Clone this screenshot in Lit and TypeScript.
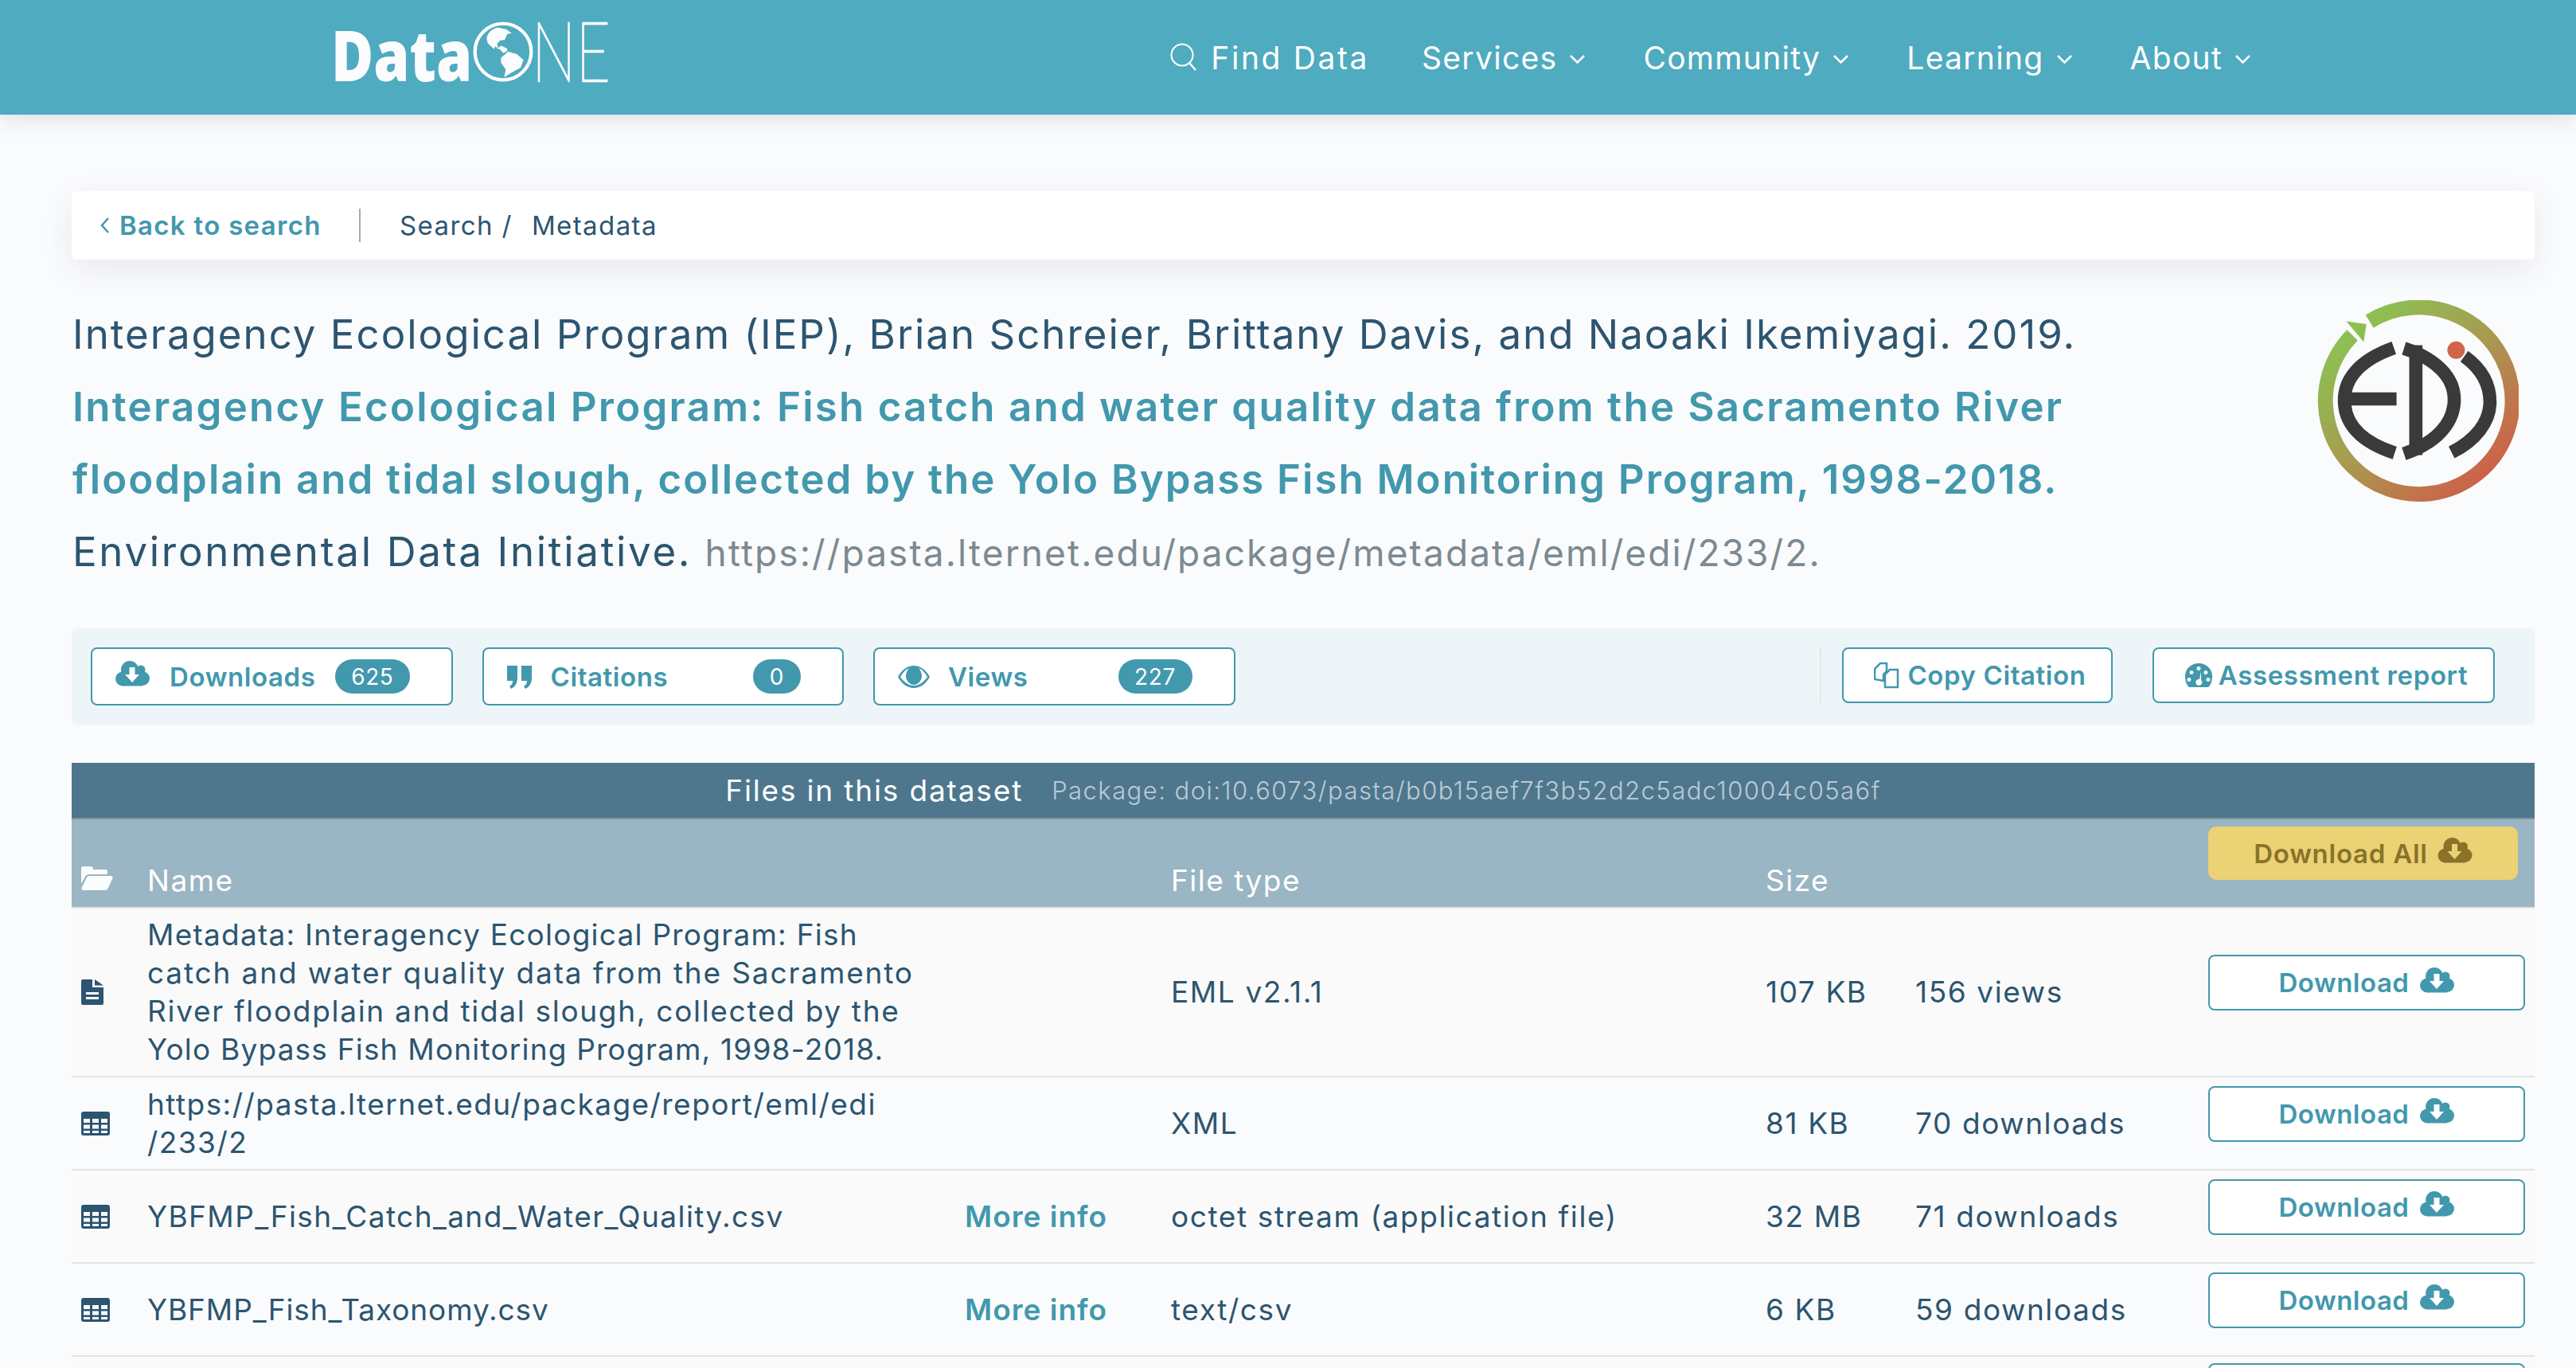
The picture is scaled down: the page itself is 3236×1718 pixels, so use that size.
import { LitElement, html, css } from "lit";
import { customElement } from "lit/decorators.js";

const cloud = (arrow: string, w = 43, h = 32) => html`<svg class="cl" width=${w} height=${h} viewBox="0 0 43 32">
  <circle cx="18" cy="11" r="11" fill="currentColor"/><circle cx="32" cy="11" r="5.5" fill="currentColor"/>
  <circle cx="9" cy="22.5" r="9" fill="currentColor"/><circle cx="34" cy="22" r="9" fill="currentColor"/>
  <rect x="9" y="14" width="25" height="17.5" fill="currentColor"/><rect x="24" y="10" width="10" height="10" fill="currentColor"/>
  <path d="M17.5 8h7v9h5.500l-9 10-9-10h5.500z" fill=${arrow}/></svg>`;
const chevron = html`<svg class="chev" width="24" height="14" viewBox="0 0 24 14"><path d="M3 3l8.500 8.500L20 3" fill="none" stroke="#fff" stroke-width="2.600"/></svg>`;
const table = html`<svg width="36" height="30" viewBox="0 0 36 30"><path fill-rule="evenodd" fill="#2c5570" d="M3 0h30a3 3 0 0 1 3 3v24a3 3 0 0 1-3 3H3a3 3 0 0 1-3-3V3a3 3 0 0 1 3-3zM3 9v5h8V9zm11 0v5h8V9zm11 0v5h8V9zM3 16.500v5h8v-5zm11 0v5h8v-5zm11 0v5h8v-5zM3 24v3h8v-3zm11 0v3h8v-3zm11 0v3h8v-3z"/></svg>`;
const fileIcon = html`<svg width="28" height="32" viewBox="0 0 28 32"><path fill-rule="evenodd" fill="#2c5570" d="M0 2a2 2 0 0 1 2-2h12v10h14v20a2 2 0 0 1-2 2H2a2 2 0 0 1-2-2zM6 16v3h16v-3zm0 6v3h16v-3zM17 0l11 7.500H17z"/></svg>`;

const rows = [
  { icon: fileIcon, cls: "", name: html`<span class="l1">Metadata: Interagency Ecological Program: Fish</span><br><span class="l2">catch and water quality data from the Sacramento</span><br><span class="l3">River floodplain and tidal slough, collected by the</span><br><span class="l4">Yolo Bypass Fish Monitoring Program, 1998-2018.</span>`, more: false, type: "EML v2.1.1", size: "107 KB", count: "156 views" },
  { icon: table, cls: "url", name: html`https://pasta.lternet.edu/package/report/eml/edi<br>/233/2`, more: false, type: "XML", size: "81 KB", count: "70 downloads" },
  { icon: table, cls: "csv", name: "YBFMP_Fish_Catch_and_Water_Quality.csv", more: true, type: "octet stream (application file)", size: "32 MB", count: "71 downloads" },
  { icon: table, cls: "tax", name: "YBFMP_Fish_Taxonomy.csv", more: true, type: "text/csv", size: "6 KB", count: "59 downloads" },
];

@customElement("app-root")
export class AppRoot extends LitElement {
  static styles = css`
    :host { display: block; height: 1718px; overflow: hidden; background: #fafbfd; color: #2c5570; font-family: Inter, "Noto Sans", sans-serif; font-size: 37px; }
    * { box-sizing: border-box; }
    .top { height: 144px; background: #4fabbf; box-shadow: 0 4px 30px rgba(0,0,0,.12); display: flex; align-items: center; padding: 0 406px 0 380px; justify-content: space-between; position: relative; }
    .logo { display: block; }
    .nav { display: flex; align-items: center; gap: 70px; color: #fff; font-size: 39px; letter-spacing: 1.3px; }
    .nav div { display: flex; align-items: center; gap: 14px; }
    .nav .find { gap: 16px; letter-spacing: 2.6px; margin-right: -4px; }
    .nav svg.chev { margin-top: 4px; }
    main { padding: 96px 52px 0 90px; }
    .crumbs { height: 86px; background: #fff; border-radius: 6px; box-shadow: 0 12px 40px rgba(40,60,70,.09); display: flex; align-items: center; padding-left: 36px; font-size: 33px; letter-spacing: 1.4px; color: #2c5570; }
    .back { color: #4298ad; font-weight: 600; display: flex; align-items: center; gap: 12px; width: 325px; letter-spacing: 1.3px; }
    .crumbs .sep { width: 2px; height: 42px; background: #aaa; margin-right: 49px; }
    .crumbs .m { margin-left: 24px; }
    .cite { display: flex; justify-content: space-between; margin-top: 48px; padding-right: 20px; }
    .title { font-size: 51px; line-height: 91px; letter-spacing: 2px; white-space: nowrap; padding-left: 1px; }
    .title b { color: #4298ad; font-weight: 600; letter-spacing: 2.25px; }
    .title b.l { letter-spacing: 2px; }
    .title span { letter-spacing: 2.7px; }
    .title i { font-style: normal; color: #7c8a90; font-size: 46px; letter-spacing: 2.1px; }
    .edi { margin-top: 3px; display: block; }
    .stats { margin-top: 49px; height: 121px; background: #eef5f8; border-radius: 6px; display: flex; align-items: flex-start; padding: 24px 50px 0 24px; gap: 37px; }
    .stat { width: 454.5px; height: 73px; background: #fff; border: 2px solid #4298ad; border-radius: 8px; display: flex; align-items: center; padding-left: 29px; color: #4298ad; font-size: 33px; letter-spacing: .6px; font-weight: 600; }
    .stat .ic { margin-right: 23px; flex: none; }
    .cl { margin-top: -7px; flex: none; }
    .stat .cl { margin-right: 25px; }
    .badge { margin-left: auto; margin-right: 52px; height: 43px; min-width: 60px; padding: 0 20px; background: #4298ad; border-radius: 22px; color: #fff; font-size: 28px; font-weight: 400; display: flex; align-items: center; justify-content: center; }
    .badge.wide { min-width: 93px; }
    .vr { margin-left: auto; width: 2px; height: 71px; background: #e3e8ea; margin-right: -11px; }
    .act { height: 70px; background: #fff; border: 2px solid #4298ad; border-radius: 8px; display: flex; align-items: center; justify-content: center; gap: 8px; color: #4298ad; font-size: 33px; letter-spacing: .6px; font-weight: 600; padding-left: 7px; }
    .act.copy { width: 340px; }
    .act.report { width: 430px; margin-left: 13px; }
    .fhead { margin-top: 48px; height: 71px; background: #4e778e; border-bottom: 2px solid #7e949f; color: #fff; display: flex; align-items: center; justify-content: center; gap: 36px; font-size: 37px; letter-spacing: 1.85px; }
    .fhead span { font-size: 31px; color: #bccbd4; font-weight: 300; letter-spacing: 1.45px; }
    .grid { display: grid; grid-template-columns: 95px 1027px 259px 747px 188px 368px 410px; align-items: center; }
    .colhead { height: 112px; background: #9ab5c3; border-bottom: 2px solid #dfe2e4; color: #fff; align-items: start; font-size: 37px; letter-spacing: 1.5px; }
    .colhead > div { margin-top: 54px; }
    .colhead svg.folder { margin: 59px 0 0 12px; display: block; }
    .colhead .all { margin-top: 9px; width: 389px; height: 67px; background: #ead275; border-radius: 10px; color: #8a7229; font-size: 33px; letter-spacing: .75px; font-weight: 600; display: flex; align-items: center; justify-content: center; gap: 12px; }
    .row { min-height: 117px; padding: 9px 0; border-bottom: 2px solid #e2e3e4; line-height: 48px; letter-spacing: 1.6px; }
    .row:nth-child(odd) { background: #fafafa; }
    .row .i { padding-left: 12px; display: flex; }
    .l1 { letter-spacing: 1.25px; }
    .l2 { letter-spacing: 1.85px; }
    .l3 { letter-spacing: 1.7px; }
    .l4 { letter-spacing: 1.2px; }
    .url { letter-spacing: 1.45px; }
    .csv { letter-spacing: 1.4px; }
    .tax { letter-spacing: .9px; }
    .more { color: #4298ad; font-weight: 600; letter-spacing: 1px; }
    .dl { width: 398px; height: 70px; margin-bottom: 24px; background: #fff; border: 2px solid #4298ad; border-radius: 8px; display: flex; align-items: center; justify-content: center; gap: 14px; color: #4298ad; font-size: 33px; letter-spacing: .5px; font-weight: 600; }
    .tail { height: 40px; background: #fafafa; padding: 8px 0 0 2684px; }
    .tail .dl { margin: 0; }
  `;

  render() {
    return html`
      <div class="top">
        <svg class="logo" width="500" height="144" viewBox="0 0 1500 432">
          <text x="108" y="305" font-family="Open Sans" font-weight="800" font-size="266" fill="#fbfcfe" textLength="532" lengthAdjust="spacingAndGlyphs">Data</text>
          <circle cx="756" cy="195" r="106" fill="none" stroke="#fbfcfe" stroke-width="13"/>
          <path fill="#fbfcfe" d="M695 150C692 128 712 106 738 104L768 110L788 125L772 128L762 150L745 152L733 165L738 180L726 174L722 185L708 172C698 165 696 158 695 150Z"/>
          <path fill="#fbfcfe" d="M725 178L745 187L757 200L772 192L770 182L748 172L740 180Z"/>
          <path fill="#fbfcfe" d="M748 218L775 194L808 204L833 226L822 255L790 272L760 291L766 262L748 236Z"/>
          <text x="864" y="305" font-family="Lato" font-weight="100" font-size="310" fill="#fbfcfe" stroke="#fbfcfe" stroke-width="7" textLength="296" lengthAdjust="spacingAndGlyphs">NE</text>
        </svg>
        <div class="nav">
          <div class="find">
            <svg width="36" height="36" viewBox="0 0 36 36"><circle cx="16" cy="15" r="13.500" fill="none" stroke="#fff" stroke-width="2"/><path d="M25 25l8 9" stroke="#fff" stroke-width="2.500"/></svg>
            Find Data
          </div>
          <div>Services ${chevron}</div>
          <div>Community ${chevron}</div>
          <div>Learning ${chevron}</div>
          <div>About ${chevron}</div>
        </div>
      </div>
      <main>
        <div class="crumbs">
          <div class="back"><svg width="12" height="22" viewBox="0 0 12 22"><path d="M10 2L2 11l8 9" fill="none" stroke="#4298ad" stroke-width="2.500"/></svg>Back to search</div>
          <div class="sep"></div>
          <span>Search /</span><span class="m">Metadata</span>
        </div>
        <div class="cite">
          <div class="title">
            Interagency Ecological Program (IEP), Brian Schreier, Brittany Davis, and Naoaki Ikemiyagi. 2019.<br>
            <b>Interagency Ecological Program: Fish catch and water quality data from the Sacramento River</b><br>
            <b class="l">floodplain and tidal slough, collected by the Yolo Bypass Fish Monitoring Program, 1998-2018.</b><br>
            <span>Environmental Data Initiative.</span> <i>https://pasta.lternet.edu/package/metadata/eml/edi/233/2.</i>
          </div>
          <svg class="edi" width="255" height="256" viewBox="148 80 764 770">
            <defs><linearGradient id="g" gradientUnits="userSpaceOnUse" x1="260" y1="200" x2="760" y2="760">
              <stop offset="0" stop-color="#8cc152"/><stop offset=".5" stop-color="#a89a50"/><stop offset="1" stop-color="#cc6349"/></linearGradient></defs>
            <path d="M350 160A353 353 0 1 1 285 212" fill="none" stroke="url(#g)" stroke-width="57"/>
            <path d="M262 160L338 170L328 238Z" fill="#8cc152"/>
            <g fill="none" stroke="#3a3a3a" stroke-width="50">
              <path d="M442 260C315 305 255 375 255 458C255 545 315 615 445 657"/>
              <path d="M270 453H452"/>
              <path d="M525 250V665"/>
              <path d="M480 262C600 300 670 370 670 455C670 545 600 620 480 660"/>
              <path d="M708 292C775 340 805 400 805 465C805 540 750 610 660 655"/>
            </g>
            <circle cx="677" cy="269" r="33" fill="#d0654a"/>
          </svg>
        </div>
        <div class="stats">
          <div class="stat">${cloud("#fff")}Downloads<span class="badge wide">625</span></div>
          <div class="stat"><svg class="ic" width="32" height="32" viewBox="0 0 32 32"><path fill="currentColor" d="M0 2h13v15c0 7-3 12-8 14l-2-3c3-2 4-4 4-7H0zM18 2h13v15c0 7-3 12-8 14l-2-3c3-2 4-4 4-7h-7z"/></svg>Citations<span class="badge">0</span></div>
          <div class="stat"><svg class="ic" width="40" height="32" viewBox="0 0 40 32"><path fill-rule="evenodd" fill="currentColor" d="M20 2c8 0 15 5 20 14-5 9-12 14-20 14S5 25 0 16C5 7 12 2 20 2zM14 5C9 7 6 11 3 16c4 6 10 11 17 11s13-5 17-11c-3-5-6-9-11-11 2 2 4 6 4 10 0 6-5 11-10 11s-10-5-10-11c0-4 2-8 4-10z"/></svg>Views<span class="badge wide">227</span></div>
          <div class="vr"></div>
          <div class="act copy"><svg width="34" height="34" viewBox="0 0 34 34"><path fill="none" stroke="currentColor" stroke-width="2.500" d="M1 22V9l7-7h8v10l-4 4v8zM14 16l6-6h10v22H14z"/></svg>Copy Citation</div>
          <div class="act report"><svg width="34" height="30" viewBox="0 0 34 30"><path fill-rule="evenodd" fill="currentColor" d="M17 0c9.500 0 17 7 17 16 0 5-1 9-3 12l-2 2H5l-2-2C1 25 0 21 0 16 0 7 7.500 0 17 0zM17 4a2.500 2.500 0 1 0 0 5 2.500 2.500 0 0 0 0-5zM8 9a2.500 2.500 0 1 0 0 5 2.500 2.500 0 0 0 0-5zM26 9a2.500 2.500 0 1 0 0 5 2.500 2.500 0 0 0 0-5zM5 18a2.500 2.500 0 1 0 0 5 2.500 2.500 0 0 0 0-5zM29 18a2.500 2.500 0 1 0 0 5 2.500 2.500 0 0 0 0-5zM20 10l-2 10a4 4 0 1 0 2 1z"/></svg>Assessment report</div>
        </div>
        <div class="fhead">Files in this dataset<span>Package: doi:10.6073/pasta/b0b15aef7f3b52d2c5adc10004c05a6f</span></div>
        <div class="grid colhead">
          <svg class="folder" width="40" height="30" viewBox="0 0 40 30"><path fill="#fbfcfe" d="M0 3a3 3 0 0 1 3-3h9a3 3 0 0 1 3 3v1h15a3 3 0 0 1 3 3v3H11c-3 0-5 1-6 3l-5 9zM10 12h27c2 0 3 1.500 2.500 3L34 27c-1 2-2 3-4 3H3c-2 0-3-1.500-2.500-3L7 14c.7-1.300 2-2 3-2z"/></svg>
          <div>Name</div><div></div><div>File type</div><div>Size</div><div></div>
          <div class="all">Download All ${cloud("#ead275", 44, 32)}</div>
        </div>
        <div>
          ${rows.map((r) => html`<div class="grid row">
            <div class="i">${r.icon}</div>
            <div class=${r.cls}>${r.name}</div>
            <div class="more">${r.more ? "More info" : ""}</div>
            <div>${r.type}</div><div>${r.size}</div><div>${r.count}</div>
            <div class="dl">Download ${cloud("#fff")}</div>
          </div>`)}
        </div>
        <div class="tail"><div class="dl"></div></div>
      </main>
    `;
  }
}
